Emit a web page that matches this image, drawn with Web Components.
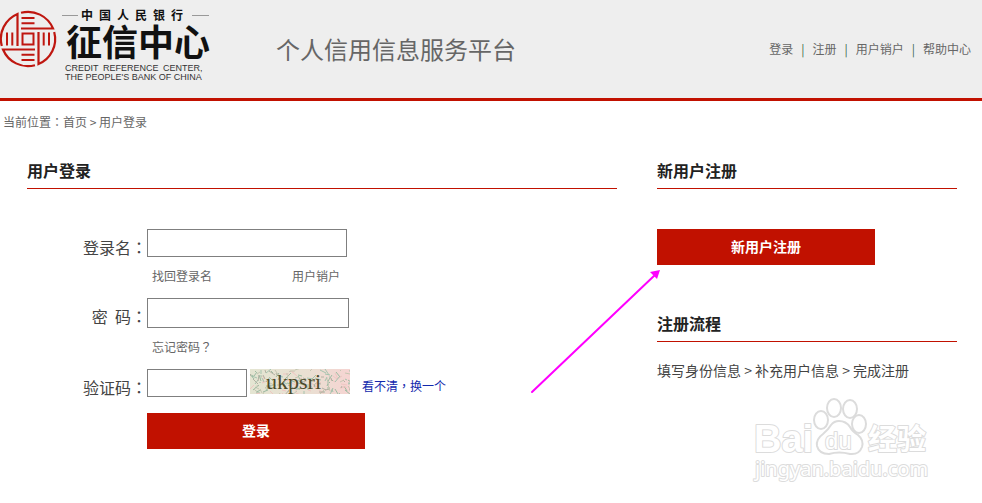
<!DOCTYPE html>
<html lang="zh-CN">
<head>
<meta charset="utf-8">
<meta name="viewport" content="width=device-width, initial-scale=1">
<title>个人信用信息服务平台</title>
<style>
  body {
    --red: #c11100;
    --ink: #222;
    --text: #444;
    --muted: #666;
    min-height: 100vh;
    margin: 0;
    background: #fff;
    color: var(--text);
    font: 12px/18px "Noto Sans CJK SC", sans-serif;
  }
</style>
</head>
<body>
<credit-page></credit-page>

<script>
class BankLogo extends HTMLElement {
  constructor() {
    super();
    this.attachShadow({ mode: 'open' });
  }

  connectedCallback() {
    // the seal is one quarter, turned four times round its square hole
    const quarters = [0, 90, 180, 270].map((angle) => `
      <g transform="rotate(${angle} 28 39)">
        <path d="M1.800 46A27 27 0 0 1 17.500 14V46" stroke-width="2.200"/>
        <path d="M7 32.500V45.500M12.300 32.500V45.500"/>
      </g>
    `).join('');

    this.shadowRoot.innerHTML = /* html */ `
      <style>
        :host { display: block; line-height: 0; }
        .cn { font-family: "Noto Sans CJK SC", sans-serif; font-weight: 700; fill: #111; }
        .en { font: 9px "Liberation Sans", sans-serif; fill: #333; }
      </style>
      <svg width="212" height="90" viewBox="0 0 212 90">
        <g fill="none" stroke="#bf1710" stroke-width="2">
          ${quarters}
          <rect x="22.500" y="33.500" width="11" height="11"/>
        </g>
        <path d="M62 15.500h16M192 15.500h17" stroke="#999"/>
        <text class="cn" x="81 99 117 135 153 171" y="20" font-size="12">中国人民银行</text>
        <text class="cn" x="66" y="56" font-size="36">征信中心</text>
        <text class="en" x="65" y="71">CREDIT</text>
        <text class="en" x="103" y="71">REFERENCE</text>
        <text class="en" x="163" y="71">CENTER,</text>
        <text class="en" x="65" y="80">THE PEOPLE'S BANK OF CHINA</text>
      </svg>
    `;
  }
}

class SiteHeader extends HTMLElement {
  constructor() {
    super();
    this.attachShadow({ mode: 'open' });
  }

  connectedCallback() {
    this.shadowRoot.innerHTML = /* html */ `
      <style>
        :host { display: block; }
        header {
          display: flex;
          align-items: center;
          min-height: 98px;
          border-bottom: 3px solid var(--red);
          background: #eee;
        }
        bank-logo { align-self: flex-start; }
        h1 {
          margin: 0 0 0 64px;
          color: var(--muted);
          font-size: 24px;
          font-weight: 400;
          line-height: 36px;
        }
        nav { display: flex; margin-left: auto; padding-right: 11px; }
        a { color: var(--muted); text-decoration: none; }
        a + a::before { content: '|'; margin: 0 8px; color: #3c6b4c; }
        a:hover { text-decoration: underline; }
      </style>
      <header>
        <bank-logo></bank-logo>
        <h1>个人信用信息服务平台</h1>
        <nav>
          <a href="#login">登录</a><a href="#register">注册</a><a href="#cancel">用户销户</a><a href="#help">帮助中心</a>
        </nav>
      </header>
    `;
  }
}

class SectionTitle extends HTMLElement {
  constructor() {
    super();
    this.attachShadow({ mode: 'open' });
    this.shadowRoot.innerHTML = /* html */ `
      <style>
        :host { display: block; }
        h2 {
          margin: 0;
          padding-bottom: 7px;
          border-bottom: 1px solid var(--red);
          color: var(--ink);
          font-size: 16px;
          font-weight: 700;
          line-height: 22px;
        }
      </style>
      <h2><slot></slot></h2>
    `;
  }
}

class ActionButton extends HTMLElement {
  constructor() {
    super();
    this.attachShadow({ mode: 'open' });
    this.shadowRoot.innerHTML = /* html */ `
      <style>
        :host { display: block; }
        button {
          width: 218px;
          height: 36px;
          border: 0;
          padding: 0 0 3px;
          background: var(--red);
          color: #fff;
          font: inherit;
          font-size: 14px;
          font-weight: 700;
          cursor: pointer;
        }
        button:hover { background: #a90f00; }
      </style>
      <button type="button"><slot></slot></button>
    `;
  }
}

class FormField extends HTMLElement {
  constructor() {
    super();
    this.attachShadow({ mode: 'open' });
  }

  connectedCallback() {
    const label = this.getAttribute('label');
    const type = this.getAttribute('type') || 'text';

    this.shadowRoot.innerHTML = /* html */ `
      <style>
        :host { display: grid; grid-template-columns: 120px 1fr; }
        label {
          padding-top: 9px;
          font-size: 16px;
          line-height: 18px;
          text-align: right;
          white-space: pre;
        }
        /* the TC face centres full-width marks in their cell */
        label span { font-family: "Noto Sans CJK TC", sans-serif; }
        .control { display: flex; }
        input {
          box-sizing: border-box;
          width: var(--field-width, 200px);
          height: var(--field-height, 28px);
          margin: 0;
          border: 1px solid #7f7f7f;
          padding: 2px 4px;
          font: inherit;
          font-size: 14px;
        }
        .hint { grid-column: 2; }
      </style>
      <label for="field">${label}<span lang="zh-TW">：</span></label>
      <div class="control">
        <input id="field" type="${type}" autocomplete="off">
        <slot></slot>
      </div>
      <div class="hint"><slot name="hint"></slot></div>
    `;
  }
}

class CaptchaImage extends HTMLElement {
  constructor() {
    super();
    this.attachShadow({ mode: 'open' });
  }

  connectedCallback() {
    this.shadowRoot.innerHTML = /* html */ `
      <style>
        :host { display: block; line-height: 0; }
        text { font: 22px "Liberation Serif", serif; }
      </style>
      <svg width="100" height="25" viewBox="0 0 100 25">
        <defs>
          <linearGradient id="paper">
            <stop offset="0" stop-color="#e4e5d2"/>
            <stop offset="0.6" stop-color="#eadfd2"/>
            <stop offset="1" stop-color="#f6d4d2"/>
          </linearGradient>
        </defs>
        <rect width="100" height="25" fill="url(#paper)"/>
        ${this.#strokes()}
        <text x="16" y="20" fill="#4b4a2a">${this.getAttribute('code')}</text>
      </svg>
    `;
  }

  #strokes() {
    const colors = ['#9dbba2', '#c5c6b1', '#a5c4ae', '#efc6c2', '#b3b0a2'];
    let seed = 17;
    const next = (max) => {
      seed = (seed * 16807) % 2147483647;
      return Math.floor(seed / 2147483647 * max);
    };
    let strokes = '';
    for (let i = 0; i < 170; i++) {
      strokes += `<path d="M${next(100)} ${next(25)}l${next(13) - 6} ${next(9) - 2}" stroke="${colors[i % colors.length]}"/>`;
    }
    return strokes;
  }
}

class LoginForm extends HTMLElement {
  constructor() {
    super();
    this.attachShadow({ mode: 'open' });
  }

  connectedCallback() {
    this.shadowRoot.innerHTML = /* html */ `
      <style>
        :host { display: block; }
        form { margin-top: 40px; }
        .hints {
          display: flex;
          gap: 80px;
          box-sizing: border-box;
          height: 41px;
          padding: 10px 0 0 5px;
        }
        a { color: var(--muted); text-decoration: none; }
        a span { font-family: "Noto Sans CJK TC", sans-serif; }
        .password { --field-width: 202px; --field-height: 30px; }
        .code { --field-width: 100px; }
        captcha-image { margin-left: 3px; }
        .refresh { margin-left: 12px; padding-top: 8px; color: #1329ad; }
        action-button { margin: 16px 0 0 120px; }
      </style>
      <section-title>用户登录</section-title>
      <form>
        <form-field label="登录名">
          <div class="hints" slot="hint">
            <a href="#find">找回登录名</a>
            <a href="#cancel">用户销户</a>
          </div>
        </form-field>
        <form-field class="password" label="密  码" type="password">
          <div class="hints" slot="hint"><a href="#forgot">忘记密码<span lang="zh-TW">？</span></a></div>
        </form-field>
        <form-field class="code" label="验证码">
          <captcha-image code="ukpsri"></captcha-image>
          <a class="refresh" href="#refresh">看不清<span lang="zh-TW">，</span>换一个</a>
        </form-field>
        <action-button>登录</action-button>
      </form>
    `;
  }
}

class PointerArrow extends HTMLElement {
  constructor() {
    super();
    this.attachShadow({ mode: 'open' });
    this.shadowRoot.innerHTML = /* html */ `
      <style>
        :host { display: block; line-height: 0; pointer-events: none; }
      </style>
      <svg width="132" height="126" viewBox="0 0 132 126" aria-hidden="true">
        <path d="M2 123L126 5" stroke="#f0f" stroke-width="2" stroke-linecap="round"/>
        <path d="M130 1L127 10L120 3Z" fill="#f0f"/>
      </svg>
    `;
  }
}

class BaiduWatermark extends HTMLElement {
  constructor() {
    super();
    this.attachShadow({ mode: 'open' });
    this.shadowRoot.innerHTML = /* html */ `
      <style>
        :host { display: block; line-height: 0; pointer-events: none; }
        text { font-family: "Liberation Sans", sans-serif; paint-order: stroke; }
        .cn { font-family: "Noto Sans CJK SC", sans-serif; }
        .site { font-family: "Noto Sans", sans-serif; }
      </style>
      <svg width="184" height="90" viewBox="0 0 184 90">
        <g fill="#fff" stroke="#dcdcdc" stroke-width="2" stroke-linejoin="round">
          <text x="2" y="56" font-size="38" font-weight="700">Bai</text>
          <ellipse cx="69" cy="24" rx="7" ry="9"/>
          <ellipse cx="82" cy="12" rx="7" ry="9"/>
          <ellipse cx="98" cy="13" rx="7" ry="9"/>
          <ellipse cx="107" cy="28" rx="7" ry="9"/>
          <path d="M87 25Q94 25 98 31Q100 35 106 39Q112 44 110 51Q107 59 98 58Q87 55 77 58Q67 58 65 50Q64 43 71 38Q76 34 79 29Q82 25 87 25Z"/>
          <text x="73" y="53" font-size="24">du</text>
          <text class="cn" x="116" y="54" font-size="29" font-weight="700">经验</text>
          <text class="site" x="3" y="80" font-size="20">jingyan.baidu.com</text>
        </g>
      </svg>
    `;
  }
}

class RegisterPanel extends HTMLElement {
  constructor() {
    super();
    this.attachShadow({ mode: 'open' });
  }

  connectedCallback() {
    this.shadowRoot.innerHTML = /* html */ `
      <style>
        :host { display: block; position: relative; }
        action-button { margin: 40px 0 47px; }
        p { margin: 18px 0 0; font-size: 14px; line-height: 20px; }
        pointer-arrow { position: absolute; top: 110px; left: -127px; }
        baidu-watermark { position: absolute; top: 237px; left: 95px; }
      </style>
      <section-title>新用户注册</section-title>
      <action-button>新用户注册</action-button>
      <section-title>注册流程</section-title>
      <p>填写身份信息 &gt; 补充用户信息 &gt; 完成注册</p>
      <pointer-arrow></pointer-arrow>
      <baidu-watermark></baidu-watermark>
    `;
  }
}

class CreditPage extends HTMLElement {
  constructor() {
    super();
    this.attachShadow({ mode: 'open' });
  }

  connectedCallback() {
    this.shadowRoot.innerHTML = /* html */ `
      <style>
        :host { display: block; }
        .breadcrumb { padding: 12px 3px 0; color: var(--muted); }
        .breadcrumb a { color: inherit; text-decoration: none; }
        .breadcrumb span { font-family: "Noto Sans CJK TC", sans-serif; }
        main {
          display: grid;
          grid-template-columns: 1fr 300px;
          gap: 40px;
          padding: 28px 25px 48px 27px;
        }
      </style>
      <site-header></site-header>
      <div class="breadcrumb">当前位置<span lang="zh-TW">：</span><a href="#home">首页</a> &gt; 用户登录</div>
      <main>
        <login-form></login-form>
        <register-panel></register-panel>
      </main>
    `;
  }
}

customElements.define('bank-logo', BankLogo);
customElements.define('site-header', SiteHeader);
customElements.define('section-title', SectionTitle);
customElements.define('action-button', ActionButton);
customElements.define('form-field', FormField);
customElements.define('captcha-image', CaptchaImage);
customElements.define('login-form', LoginForm);
customElements.define('pointer-arrow', PointerArrow);
customElements.define('baidu-watermark', BaiduWatermark);
customElements.define('register-panel', RegisterPanel);
customElements.define('credit-page', CreditPage);
</script>
</body>
</html>
